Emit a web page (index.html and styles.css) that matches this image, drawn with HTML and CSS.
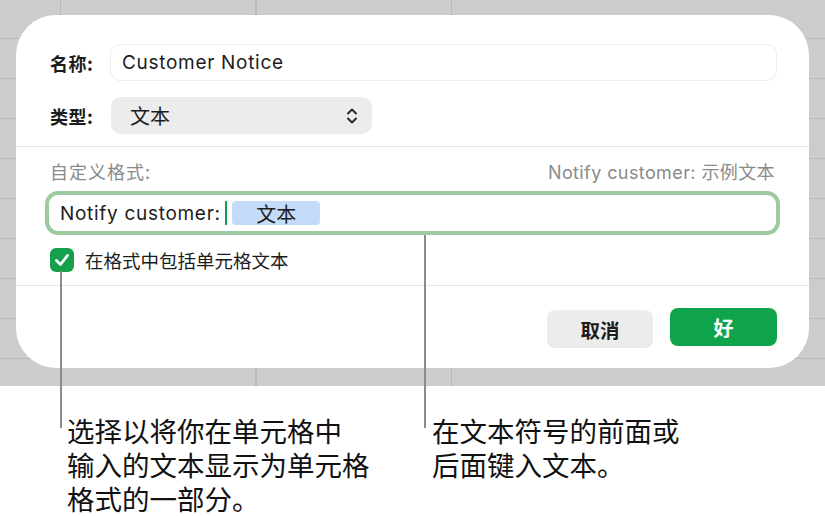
FILE: index.html
```html
<!DOCTYPE html>
<html lang="zh-CN">
<head>
<meta charset="utf-8">
<link rel="stylesheet" href="styles.css">
</head>
<body>
<div class="page">
  <div class="app">
    <div class="dialog">
      <div class="top">
        <div class="row">
          <span class="label">名称:</span>
          <div class="namefield">Customer Notice</div>
        </div>
        <div class="row">
          <span class="label">类型:</span>
          <div class="select">
            <span>文本</span>
            <svg class="chev" width="12" height="18" viewBox="0 0 12 18"><path d="M2 6.5 L6 2.5 L10 6.5 M2 11.5 L6 15.5 L10 11.5" fill="none" stroke="#2a2a2a" stroke-width="2" stroke-linecap="round" stroke-linejoin="round"/></svg>
          </div>
        </div>
      </div>
      <div class="mid">
        <div class="caption">
          <span class="cap-l">自定义格式:</span>
          <span class="cap-r">Notify customer: 示例文本</span>
        </div>
        <div class="format">
          <span class="ftext">Notify customer:</span>
          <span class="caret"></span>
          <span class="token">文本</span>
        </div>
        <div class="check">
          <span class="box"><svg width="24" height="24" viewBox="0 0 24 24"><path d="M6.5 12.5 L10.5 16.5 L17.5 7.5" fill="none" stroke="#fff" stroke-width="2.8" stroke-linecap="round" stroke-linejoin="round"/></svg></span>
          <span class="clabel">在格式中包括单元格文本</span>
        </div>
      </div>
      <div class="bottom">
        <div class="btn cancel">取消</div>
        <div class="btn ok">好</div>
      </div>
    </div>
  </div>
  <div class="notes">
    <p class="note n1">选择以将你在单元格中<br>输入的文本显示为单元格<br>格式的一部分。</p>
    <p class="note n2">在文本符号的前面或<br>后面键入文本。</p>
  </div>
  <span class="leader l1"></span>
  <span class="leader l2"></span>
</div>
</body>
</html>
```
FILE: styles.css
```css
* { box-sizing: border-box; }
html, body { margin: 0; padding: 0; background: #fff; }
body {
  font-family: Inter, "Noto Sans CJK SC", sans-serif;
  color: #1c1c1c;
  width: 825px;
  height: 516px;
  overflow: hidden;
}
.page { position: relative; width: 825px; height: 516px; }
.app {
  height: 386px;
  padding: 15px 16px 0 16px;
  background-color: #cccccc;
  background-image:
    repeating-linear-gradient(to bottom, transparent 0 38px, #b8b8b8 38px 39px, transparent 39px 40px),
    repeating-linear-gradient(to right, transparent 0 60px, #b8b8b8 60px 61px, transparent 61px 195.5px);
}
.dialog {
  height: 353px;
  background: #fff;
  border-radius: 40px;
  display: flex;
  flex-direction: column;
}
.top {
  padding: 29px 32px 12px 34px;
  display: flex;
  flex-direction: column;
  gap: 16px;
  border-bottom: 1px solid #e4e4e4;
}
.row { display: flex; align-items: center; }
.label {
  width: 60px;
  font-family: "Noto Sans CJK SC", sans-serif;
  font-weight: 700;
  font-size: 18px;
  letter-spacing: 0.5px;
  color: #1c1c1c;
}
.namefield {
  flex: 1;
  height: 37px;
  border: 1px solid #ededed;
  border-radius: 10px;
  padding-left: 11px;
  display: flex;
  align-items: center;
  font-size: 19px;
  letter-spacing: 0.7px;
  color: #1c1c1c;
}
.select {
  width: 261px;
  height: 37px;
  margin-left: 1px;
  background: #ececec;
  border-radius: 10px;
  display: flex;
  align-items: center;
  justify-content: space-between;
  padding: 0 14px 0 19px;
  font-family: "Noto Sans CJK SC", sans-serif;
  font-size: 20px;
}
.chev { display: block; }
.mid {
  padding: 12px 29px 12px 29px;
  border-bottom: 1px solid #e4e4e4;
  display: flex;
  flex-direction: column;
}
.caption {
  display: flex;
  justify-content: space-between;
  padding: 0 5px 0 5px;
  color: #8a8a8a;
  height: 24px;
  align-items: center;
}
.cap-l {
  font-family: "Noto Sans CJK SC", sans-serif;
  font-size: 18px;
  letter-spacing: 1px;
}
.cap-r {
  font-family: Inter, "Noto Sans CJK SC", sans-serif;
  font-size: 18px;
  letter-spacing: 0.4px;
}
.format {
  margin-top: 8px;
  height: 44px;
  border: 4px solid #9ccb9f;
  border-radius: 13px;
  display: flex;
  align-items: center;
  padding-left: 11px;
}
.ftext { font-size: 19px; letter-spacing: 0.7px; color: #1c1c1c; }
.caret {
  width: 2.5px;
  height: 24px;
  background: #14a050;
  margin-left: 4px;
}
.token {
  margin-left: 5px;
  width: 88px;
  height: 24px;
  background: #c4dcfa;
  border-radius: 4px;
  display: flex;
  align-items: center;
  justify-content: center;
  font-family: "Noto Sans CJK SC", sans-serif;
  font-size: 20px;
  color: #1c1c1c;
}
.check {
  margin-top: 12px;
  display: flex;
  align-items: center;
  padding-left: 5px;
}
.box {
  width: 24px;
  height: 24px;
  border-radius: 6px;
  background: #17a04c;
  display: block;
}
.box svg { display: block; }
.clabel {
  margin-left: 11px;
  font-family: "Noto Sans CJK SC", sans-serif;
  font-size: 18.5px;
  color: #1c1c1c;
}
.bottom {
  display: flex;
  justify-content: flex-end;
  align-items: center;
  gap: 17px;
  padding: 22px 32px 0 0;
}
.btn {
  height: 38px;
  border-radius: 8px;
  display: flex;
  align-items: center;
  justify-content: center;
  font-family: "Noto Sans CJK SC", sans-serif;
  font-weight: 700;
  font-size: 19.5px;
}
.cancel { width: 106px; background: #ececec; color: #1c1c1c; margin-top: 2px; }
.ok { width: 107px; background: #0fa44b; color: #fff; margin-top: -2px; font-size: 20px; }
.notes {
  display: flex;
  padding-top: 27px;
}
.note {
  margin: 0;
  font-family: "Noto Sans CJK SC", sans-serif;
  font-size: 27.5px;
  line-height: 34px;
  color: #111;
  white-space: nowrap;
}
.n1 { margin-left: 67px; width: 365px; }
.n2 { margin-left: 0; }
.leader {
  position: absolute;
  width: 2px;
  background: #8b8b8b;
}
.l1 { left: 60px; top: 271px; height: 157px; }
.l2 { left: 424px; top: 235px; height: 193px; }
```
